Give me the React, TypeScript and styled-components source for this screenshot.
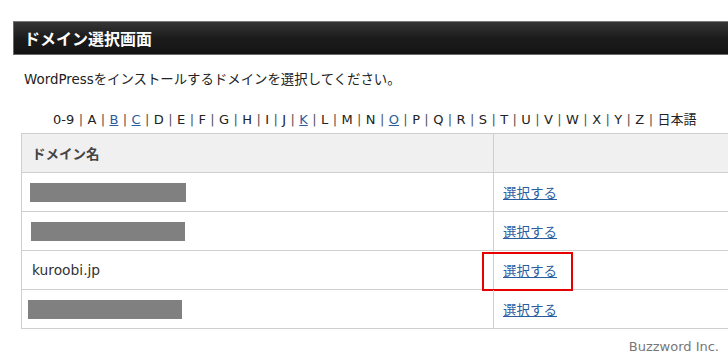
import React from 'react';
import styled, { createGlobalStyle } from 'styled-components';

const GlobalStyle = createGlobalStyle`
  html, body {
    margin: 0;
    padding: 0;
    background: #fff;
    overflow: hidden;
  }
  body {
    font-family: "DejaVu Sans", "Noto Sans CJK JP", sans-serif;
    color: #333;
  }
`;

const letters = [
  '0-9', 'A', 'B', 'C', 'D', 'E', 'F', 'G', 'H', 'I', 'J', 'K', 'L', 'M', 'N',
  'O', 'P', 'Q', 'R', 'S', 'T', 'U', 'V', 'W', 'X', 'Y', 'Z', '日本語',
];
const linked = ['B', 'C', 'K', 'O'];

const rows = [
  { name: null, bar: 156, offset: 0 },
  { name: null, bar: 154, offset: 1 },
  { name: 'kuroobi.jp', bar: 0, offset: 0 },
  { name: null, bar: 154, offset: -2 },
];

function App() {
  return (
    <Page>
      <GlobalStyle />
      <TitleBar>ドメイン選択画面</TitleBar>
      <Lead>WordPressをインストールするドメインを選択してください。</Lead>
      <AlphaNav>
        {letters.map((l, i) => (
          <React.Fragment key={l}>
            {i > 0 && <Sep>|</Sep>}
            {linked.includes(l) ? <AlphaLink href="#">{l}</AlphaLink> : <span>{l}</span>}
          </React.Fragment>
        ))}
      </AlphaNav>
      <DomainTable>
        <HeadCell>ドメイン名</HeadCell>
        <HeadCell $right />
        {rows.map((r, i) => (
          <React.Fragment key={i}>
            <Cell>
              {r.name ? <DomainName>{r.name}</DomainName> : <Masked $w={r.bar} $shift={r.offset} />}
            </Cell>
            <Cell $right>
              <SelectLink href="#">選択する</SelectLink>
              {r.name && <Highlight />}
            </Cell>
          </React.Fragment>
        ))}
      </DomainTable>
      <Credit>Buzzword Inc.</Credit>
    </Page>
  );
}
export default App;

const Page = styled.div`
  width: 728px;
  height: 360px;
  padding: 21px 0 0 13px;
  box-sizing: border-box;
  overflow: hidden;
  display: flex;
  flex-direction: column;
`;

const TitleBar = styled.div`
  width: 740px;
  height: 32px;
  box-sizing: content-box;
  border: 1px solid #6b6b6b;
  border-top-color: #7a7a7a;
  background: linear-gradient(#353535, #1c1c1c 50%, #131313);
  color: #fff;
  font-family: "Noto Sans CJK JP", sans-serif;
  font-weight: 700;
  font-size: 16px;
  line-height: 32px;
  padding-left: 10px;
`;

const Lead = styled.p`
  margin: 16px 0 0 11px;
  font-size: 13.4px;
  line-height: 18px;
  color: #222;
`;

const AlphaNav = styled.div`
  margin: 22px 0 0 40px;
  font-size: 13px;
  line-height: 18px;
  color: #222;
  display: flex;
  align-items: center;
  gap: 4.4px;
  white-space: nowrap;
`;

const Sep = styled.span`
  color: #555;
`;

const AlphaLink = styled.a`
  color: #2a5d9f;
  text-decoration: underline;
`;

const DomainTable = styled.div`
  margin: 4px 0 0 8px;
  width: 760px;
  display: grid;
  grid-template-columns: 471px 1fr;
  border-top: 1px solid #cfcfcf;
  border-left: 1px solid #cfcfcf;
`;

const HeadCell = styled.div<{ $right?: boolean }>`
  height: 38px;
  background: #f0f0f0;
  border-bottom: 1px solid #cfcfcf;
  border-left: ${(p) => (p.$right ? '1px solid #cfcfcf' : 'none')};
  padding-left: 10px;
  display: flex;
  align-items: center;
  font-family: "Noto Sans CJK JP", sans-serif;
  font-size: 13.5px;
  font-weight: 700;
  color: #444;
`;

const Cell = styled.div<{ $right?: boolean }>`
  position: relative;
  height: 38px;
  border-bottom: 1px solid #cfcfcf;
  border-left: ${(p) => (p.$right ? '1px solid #cfcfcf' : 'none')};
  padding-left: ${(p) => (p.$right ? '9px' : '8px')};
  display: flex;
  align-items: center;
`;

const Masked = styled.div<{ $w: number; $shift: number }>`
  width: ${(p) => p.$w}px;
  height: 19px;
  margin-left: ${(p) => p.$shift}px;
  background: #808080;
`;

const DomainName = styled.span`
  font-size: 13.8px;
  color: #333;
  padding-left: 2px;
`;

const SelectLink = styled.a`
  font-family: "Noto Sans CJK JP", sans-serif;
  font-size: 13.5px;
  color: #2a5d9f;
  text-decoration: underline;
`;

const Highlight = styled.div`
  position: absolute;
  left: -12px;
  top: 1px;
  width: 87px;
  height: 35px;
  border: 2px solid #e60000;
  pointer-events: none;
`;

const Credit = styled.div`
  align-self: flex-end;
  margin: 10px 9px 0 0;
  font-family: "DejaVu Sans", sans-serif;
  font-size: 13px;
  color: #777;
`;
